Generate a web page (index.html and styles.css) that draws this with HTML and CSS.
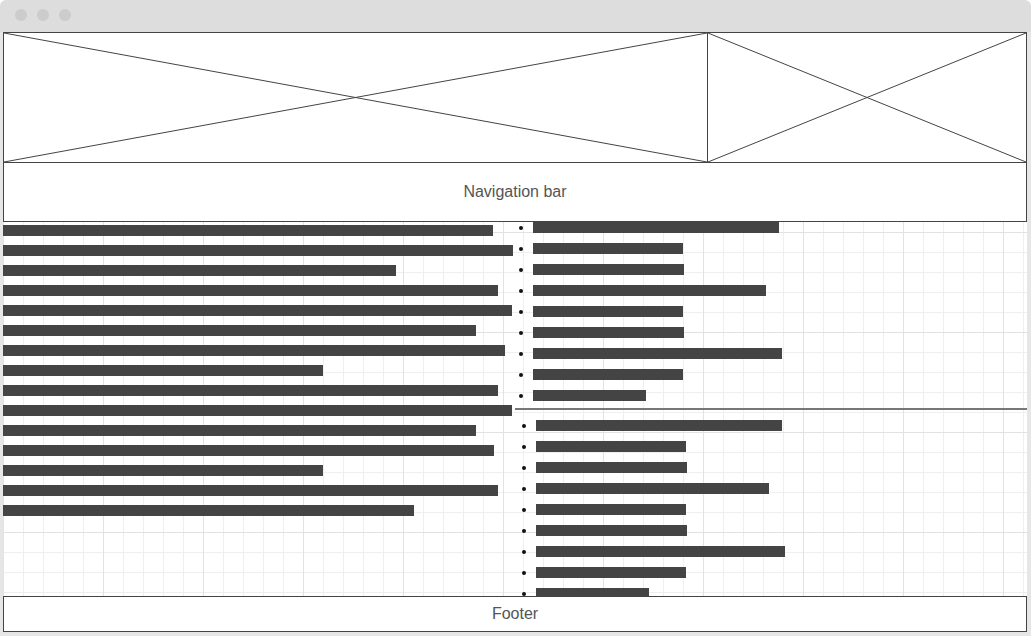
FILE: index.html
```html
<!DOCTYPE html>
<html lang="en">
<head>
    <meta charset="UTF-8">
    <meta name="viewport" content="width=device-width, initial-scale=1.0">
    <title>Wireframe</title>
    <link rel="stylesheet" href="styles.css">
</head>
<body>
    <div class="window">
        <div class="titlebar">
            <span class="dot"></span>
            <span class="dot"></span>
            <span class="dot"></span>
        </div>
        <div class="page">
            <!-- header images -->
            <div class="hero">
                <div class="placeholder wide">
                    <svg viewBox="0 0 100 100" preserveAspectRatio="none">
                        <line x1="0" y1="0" x2="100" y2="100"/>
                        <line x1="0" y1="100" x2="100" y2="0"/>
                    </svg>
                </div>
                <div class="placeholder">
                    <svg viewBox="0 0 100 100" preserveAspectRatio="none">
                        <line x1="0" y1="0" x2="100" y2="100"/>
                        <line x1="0" y1="100" x2="100" y2="0"/>
                    </svg>
                </div>
            </div>
            <div class="nav">Navigation bar</div>

            <div class="content">
                <div class="main">
                    <div class="bar" style="width: 490px"></div>
                    <div class="bar" style="width: 510px"></div>
                    <div class="bar" style="width: 393px"></div>
                    <div class="bar" style="width: 495px"></div>
                    <div class="bar" style="width: 509px"></div>
                    <div class="bar" style="width: 473px"></div>
                    <div class="bar" style="width: 502px"></div>
                    <div class="bar" style="width: 320px"></div>
                    <div class="bar" style="width: 495px"></div>
                    <div class="bar" style="width: 509px"></div>
                    <div class="bar" style="width: 473px"></div>
                    <div class="bar" style="width: 491px"></div>
                    <div class="bar" style="width: 320px"></div>
                    <div class="bar" style="width: 495px"></div>
                    <div class="bar" style="width: 411px"></div>
                </div>
                <div class="side">
                    <ul class="list">
                        <li><span class="bar" style="width: 246px"></span></li>
                        <li><span class="bar" style="width: 150px"></span></li>
                        <li><span class="bar" style="width: 151px"></span></li>
                        <li><span class="bar" style="width: 233px"></span></li>
                        <li><span class="bar" style="width: 150px"></span></li>
                        <li><span class="bar" style="width: 151px"></span></li>
                        <li><span class="bar" style="width: 249px"></span></li>
                        <li><span class="bar" style="width: 150px"></span></li>
                        <li><span class="bar" style="width: 113px"></span></li>
                    </ul>
                    <hr class="divider">
                    <ul class="list second">
                        <li><span class="bar" style="width: 246px"></span></li>
                        <li><span class="bar" style="width: 150px"></span></li>
                        <li><span class="bar" style="width: 151px"></span></li>
                        <li><span class="bar" style="width: 233px"></span></li>
                        <li><span class="bar" style="width: 150px"></span></li>
                        <li><span class="bar" style="width: 151px"></span></li>
                        <li><span class="bar" style="width: 249px"></span></li>
                        <li><span class="bar" style="width: 150px"></span></li>
                        <li><span class="bar" style="width: 113px"></span></li>
                    </ul>
                </div>
            </div>

            <div class="footer">Footer</div>
        </div>
    </div>
</body>
</html>
```

FILE: styles.css
```css
/* wireframe page */
html, body {
    margin: 0;
    padding: 0;
    background: #ffffff;
}

body {
    font-family: "Liberation Sans", Arial, sans-serif;
}

.window {
    width: 1031px;
    height: 636px;
    box-sizing: border-box;
    padding: 0 4px 4px 3px;
    background: #e6e6e6;
    border-radius: 6px 6px 0 0;
    overflow: hidden;
}

.titlebar {
    height: 32px;
    margin: 0 -4px 0 -3px;
    padding-left: 15px;
    box-sizing: border-box;
    background: #dddddd;
    border-radius: 6px 6px 0 0;
    display: flex;
    align-items: center;
    gap: 10px;
}

.dot {
    width: 12px;
    height: 12px;
    border-radius: 50%;
    background: #cccccc;
    margin-top: -2px;
}

.page {
    height: 600px;
    display: flex;
    flex-direction: column;
    background-color: #ffffff;
    background-image:
        linear-gradient(#e2e2e2 1px, transparent 1px),
        linear-gradient(90deg, #e2e2e2 1px, transparent 1px),
        linear-gradient(#efefef 1px, transparent 1px),
        linear-gradient(90deg, #efefef 1px, transparent 1px);
    background-size: 100px 100px, 100px 100px, 20px 20px, 20px 20px;
}

.hero {
    height: 131px;
    flex: none;
    display: flex;
    box-sizing: border-box;
    border: 1px solid #444;
    background: #fff;
}

.placeholder {
    flex: 1;
    position: relative;
}

.placeholder.wide {
    flex: none;
    width: 703px;
    border-right: 1px solid #444;
}

.placeholder svg {
    position: absolute;
    left: 0;
    top: 0;
    width: 100%;
    height: 100%;
}

.placeholder line {
    stroke: #444;
    stroke-width: 1;
    vector-effect: non-scaling-stroke;
}

.nav {
    height: 59px;
    flex: none;
    box-sizing: border-box;
    border: 1px solid #444;
    border-top: none;
    background: #fff;
    display: flex;
    align-items: center;
    justify-content: center;
    color: #555;
    font-size: 16px;
}

.content {
    height: 374px;
    flex: none;
    display: flex;
    overflow: hidden;
}

.main {
    width: 512px;
    padding-top: 3px;
    display: flex;
    flex-direction: column;
    gap: 9px;
}

.bar {
    display: block;
    height: 11px;
    background: #444;
    flex: none;
}

.side {
    width: 512px;
}

.list {
    list-style: none;
    margin: 0;
    padding: 0 0 0 4px;
    display: flex;
    flex-direction: column;
    gap: 10px;
}

.list.second {
    padding-left: 7px;
}

.list li {
    display: flex;
    align-items: center;
    gap: 10px;
    height: 11px;
}

.list li::before {
    content: "";
    width: 4px;
    height: 4px;
    border-radius: 50%;
    background: #111;
    flex: none;
}

.divider {
    margin: 7px 0 10px;
    height: 2px;
    border: none;
    background: #777;
}

.footer {
    height: 36px;
    flex: none;
    box-sizing: border-box;
    border: 1px solid #444;
    background: #fff;
    display: flex;
    align-items: center;
    justify-content: center;
    color: #555;
    font-size: 16px;
}
```
